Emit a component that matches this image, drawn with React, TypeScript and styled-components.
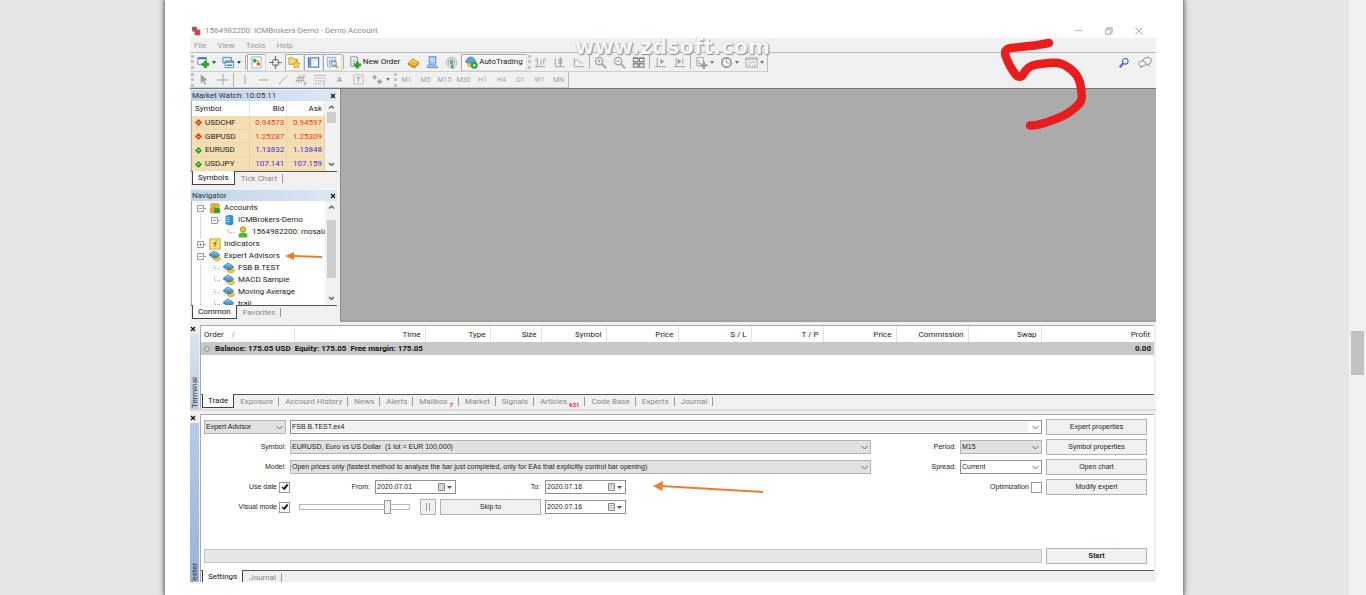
import React from "react";
import styled, { createGlobalStyle, css } from "styled-components";

const UI = 'Roboto, "Open Sans", sans-serif';
const FORM = '"Liberation Sans", sans-serif';

const GlobalStyle = createGlobalStyle`
  *, *::before, *::after { box-sizing: border-box; }
  html, body { margin: 0; background: #e6e6e6; }
  body { font-family: ${UI}; font-size: 8px; line-height: 12px; color: #222; overflow: hidden; }
  button, input, select { font: inherit; color: inherit; margin: 0; }
  svg { display: block; flex: none; }
`;

/* ---------- page ---------- */

const Page = styled.div`
  display: flex;
  min-height: 100vh;
`;

const Sheet = styled.main`
  flex: 1;
  min-width: 0;
  margin: 0 166px 0 165px;
  padding: 24px 27px 0 25px;
  background: #fff;
  box-shadow: 0 0 3px 1px #777, 0 0 7px 1px #999;
`;

const ScrollTrack = styled.div`
  width: 17px;
  padding: 331px 2px 0;
  background: #f0f0f0;
`;

const ScrollThumb = styled.div`
  height: 44px;
  background: #c1c1c1;
`;

const Window = styled.div`
  position: relative;
  background: #f0f0f0;
`;

/* ---------- title and menu ---------- */

const TitleBar = styled.header`
  display: flex;
  align-items: center;
  height: 14px;
  padding: 0 12px 0 1px;
  background: #fff;
  color: #8a8a8a;
`;

const Title = styled.h1`
  flex: 1;
  margin: 0 0 0 4px;
  font-size: 8px;
  font-weight: 400;
`;

const WindowButtons = styled.div`
  display: flex;
  gap: 20px;
`;

const PlainButton = styled.button`
  display: flex;
  align-items: center;
  justify-content: center;
  padding: 0;
  border: 0;
  background: none;
`;

const Menu = styled.nav`
  display: flex;
  gap: 11px;
  height: 15px;
  padding: 1px 4px 0;
  border-bottom: 1px solid #bdbdbd;
  color: #9a9a9a;
`;

const MenuItem = styled(PlainButton)`
  height: 13px;
`;

/* ---------- toolbars ---------- */

const ToolRow = styled.div`
  display: flex;
  justify-content: space-between;
  padding-right: 4px;
`;

const ToolBand = styled.div<{ $h: number }>`
  display: flex;
  align-items: center;
  height: ${(p) => p.$h}px;
  border-right: 1px solid #bbb;
  border-bottom: 1px solid #cfcfcf;
`;

const Grip = styled.div`
  width: 3px;
  height: 14px;
  margin-left: 1px;
  border-left: 3px dotted #c4c4c4;
`;

const Sep = styled.div`
  width: 1px;
  height: 14px;
  margin: 0 1px;
  background: #b0b0b0;
`;

const Tool = styled(PlainButton)<{ $w?: number; $on?: boolean }>`
  width: ${(p) => p.$w || 19}px;
  height: 17px;
  gap: 1px;
  color: #222;
  white-space: nowrap;
  ${(p) =>
    p.$on &&
    css`
      background: #f6f6f6;
      border: 1px solid #d8d8d8;
      border-top-color: #aaa;
      border-left-color: #aaa;
    `}
`;

const Period = styled(Tool)`
  color: #a5a5a5;
  font-size: 7px;
`;

const ToolLetter = styled.span`
  color: #a5a5a5;
  font-weight: 600;
`;

const SearchTools = styled.div`
  display: flex;
  align-items: center;
  gap: 8px;
`;

/* ---------- panels ---------- */

const Work = styled.div`
  display: flex;
  border-top: 1px solid #777;
`;

const Dock = styled.aside`
  display: flex;
  flex-direction: column;
  gap: 4px;
  width: 150px;
  padding: 1px 3px 2px 1px;
`;

const ChartArea = styled.section`
  flex: 1;
  background: #ababab;
  border-left: 1px solid #8a8a8a;
  border-bottom: 2px solid #a0a0a0;
`;

const Panel = styled.section``;

const PanelTitle = styled.h2`
  display: flex;
  align-items: center;
  justify-content: space-between;
  height: 11px;
  margin: 0;
  padding: 0 1px 0 1px;
  font-size: 8px;
  font-weight: 400;
  color: #333;
  background: linear-gradient(90deg, #bfd3e8, #dce8f4);
`;

const PanelBody = styled.div<{ $h: number }>`
  display: flex;
  height: ${(p) => p.$h}px;
  overflow: hidden;
  background: #fff;
  border-left: 1px solid #aaa;
`;

const Scroll = styled.div`
  display: flex;
  flex-direction: column;
  align-items: center;
  width: 12px;
  padding: 3px 0;
  background: #f2f2f2;
`;

const Thumb = styled.div<{ $top: number; $h: number }>`
  width: 9px;
  height: ${(p) => p.$h}px;
  margin: ${(p) => p.$top}px 0 auto;
  background: #cdcdcd;
`;

const Quotes = styled.table`
  flex: 1;
  height: 70px;
  border-collapse: collapse;
  table-layout: fixed;
  line-height: 10px;
  th, td { padding: 1px 2px 0 0; text-align: right; border-right: 1px solid #e4d3b0; }
  th { height: 15px; font-weight: 400; border-color: #e5e5e5; }
  th:first-child, td:first-child { width: 57px; text-align: left; padding-left: 3px; }
  td { border-bottom: 1px solid #ecd9b4; }
  tbody { background: #f6deb3; }
`;

const Price = styled.td<{ $up: boolean }>`
  color: ${(p) => (p.$up ? "#3a2ee0" : "#f03a20")};
`;

const Pair = styled.span`
  display: flex;
  align-items: center;
  gap: 3px;
`;

const TabBar = styled.div<{ $h?: number }>`
  display: flex;
  height: ${(p) => p.$h || 15}px;
  padding-left: 1px;
  border-top: 1px solid #555;
`;

const Tab = styled.button<{ $on?: boolean }>`
  display: flex;
  align-items: center;
  height: 13px;
  padding: 0 6px;
  border: 0;
  background: linear-gradient(#999, #999) right 2px / 1px 9px no-repeat;
  color: #888;
  white-space: nowrap;
  ${(p) =>
    p.$on &&
    css`
      height: 14px;
      margin-top: -1px;
      padding: 1px 5px 0;
      color: #111;
      background: #fff;
      border: 1px solid #444;
      border-top: 0;
    `}
`;

const Count = styled.sub`
  align-self: flex-end;
  margin-left: 2px;
  color: #e23;
  font-size: 6px;
  font-weight: 700;
  line-height: 6px;
`;

const Tree = styled.ul`
  flex: 1;
  min-width: 0;
  margin: 0;
  padding: 1px 0 0 5px;
  list-style: none;
  white-space: nowrap;
`;

const Node = styled.li<{ $level: number }>`
  display: flex;
  align-items: center;
  gap: 3px;
  height: 12px;
  padding-left: ${(p) => p.$level * 14}px;
  background: ${(p) =>
    p.$level
      ? "repeating-linear-gradient(#bbb 0 1px, transparent 1px 2px) 3px 0 / 1px 100% no-repeat"
      : "none"};
`;

const NodeMark = styled.span`
  display: flex;
  width: 9px;
`;

const Arrow = styled.svg`
  margin-left: 1px;
`;

/* ---------- lower docks ---------- */

const Bottom = styled.section<{ $gap: number }>`
  display: flex;
  margin-top: ${(p) => p.$gap}px;
  border-bottom: 2px solid #dcdcdc;
  padding-right: 2px;
`;

const Tester = styled(Bottom)`
  overflow: hidden;
  border-bottom: 0;
`;

const Side = styled.div`
  display: flex;
  flex-direction: column;
  align-items: flex-start;
  width: 10px;
  padding-top: 1px;
`;

const SideName = styled.div<{ $deep?: boolean; $clip?: boolean }>`
  flex: 1;
  width: 9px;
  height: 0;
  margin-top: 2px;
  overflow: hidden;
  writing-mode: vertical-rl;
  transform: rotate(180deg);
  line-height: 9px;
  color: #333;
  background: ${(p) => (p.$deep ? "linear-gradient(#98b4da, #b4cbea)" : "linear-gradient(#b9cce0, #d8e6f3)")};
  text-indent: ${(p) => (p.$clip ? "-3px" : "1px")};
`;

const BottomBody = styled.div`
  flex: 1;
  min-width: 0;
  border-top: 1px solid #aaa;
  border-left: 1px solid #aaa;
`;

const TradeArea = styled.div`
  height: 68px;
  background: #fff;
`;

const Trades = styled.table`
  width: 100%;
  border-collapse: collapse;
  table-layout: fixed;
  th { height: 16px; padding: 1px 4px 0 3px; text-align: right; font-weight: 400; border-right: 1px solid #e2e2e2; }
  th:first-child { text-align: left; }
  th:last-child { border-right: 0; }
  td { height: 13px; padding: 0 3px 0 2px; font-weight: 700; color: #111; background: #c8c8c8; }
  td:last-child { text-align: right; }
`;

const SortMark = styled.span`
  margin-left: 8px;
  color: #888;
`;

const Balance = styled.span`
  display: flex;
  align-items: center;
  gap: 4px;
  white-space: pre;
`;

/* ---------- tester form ---------- */

const Form = styled.form`
  position: relative;
  padding: 4px 7px 6px 3px;
  background: #fff;
  font-family: ${FORM};
  font-size: 7px;
`;

const Fields = styled.div`
  display: grid;
  grid-template-columns: 82px minmax(0, 1fr) 81px 82px 101px;
  grid-auto-rows: 16px;
  column-gap: 4px;
  row-gap: 4px;
  align-items: center;
`;

const Label = styled.label`
  text-align: right;
  white-space: nowrap;
`;

const CheckLabel = styled.label<{ $span?: boolean }>`
  display: flex;
  align-items: center;
  justify-content: flex-end;
  gap: 2px;
  margin-right: ${(p) => (p.$span ? "0" : "-4px")};
  white-space: nowrap;
  ${(p) => p.$span && "grid-column: span 2;"}
`;

const Check = styled.input.attrs({ type: "checkbox" })`
  appearance: none;
  display: flex;
  align-items: center;
  justify-content: center;
  width: 11px;
  height: 11px;
  border: 1px solid #999;
  background: #fff;
  &:checked::after {
    content: "";
    width: 3px;
    height: 6px;
    margin-top: -2px;
    border: solid #111;
    border-width: 0 1px 1px 0;
    box-shadow: 1px 0 0 #111;
    transform: rotate(40deg);
  }
`;

const SelectBox = styled.div<{ $wide?: boolean }>`
  position: relative;
  ${(p) => p.$wide && "grid-column: 2 / 5;"}
  svg { position: absolute; right: 3px; top: 5px; pointer-events: none; }
`;

const Select = styled.select<{ $white?: boolean; $wide?: boolean }>`
  appearance: none;
  display: block;
  width: 100%;
  height: 14px;
  padding: 0 14px 0 1px;
  border: 1px solid ${(p) => (p.$white ? "#8f8f8f" : "#b4b4b4")};
  border-radius: 0;
  line-height: 12px;
  background: ${(p) => (p.$white ? "#fff" : "#e1e1e1")};
  ${(p) =>
    p.$wide &&
    css`
      background: linear-gradient(#f0f0f0, #f0f0f0) 1px 1px / calc(100% - 14px) 10px no-repeat #fff;
    `}
`;

const Button = styled.button<{ $bold?: boolean }>`
  height: 16px;
  padding: 0;
  border: 1px solid #b2b2b2;
  background: #f0f0f0;
  font-weight: ${(p) => (p.$bold ? 700 : 400)};
`;

const Inline = styled.div`
  display: flex;
  align-items: center;
`;

const DateLabel = styled(Label)<{ $w: number }>`
  width: ${(p) => p.$w}px;
  padding-right: 5px;
`;

const DateBox = styled.div`
  display: flex;
  align-items: center;
  width: 81px;
  height: 14px;
  padding-right: 2px;
  border: 1px solid #8f8f8f;
  background: #fff;
`;

const DateInput = styled.input`
  flex: 1;
  min-width: 0;
  height: 12px;
  padding: 0 1px;
  border: 0;
  background: none;
`;

const Slider = styled.input.attrs({ type: "range" })`
  appearance: none;
  width: 111px;
  height: 14px;
  margin: 0 10px 0 9px;
  background: none;
  &::-webkit-slider-runnable-track {
    height: 6px;
    border: 1px solid #b5b5b5;
    background: #fff;
  }
  &::-webkit-slider-thumb {
    appearance: none;
    width: 7px;
    height: 14px;
    margin-top: -5px;
    border: 1px solid #999;
    background: #f0f0f0;
  }
`;

const Pause = styled(Button)`
  display: flex;
  align-items: center;
  justify-content: center;
  width: 16px;
  margin-right: 4px;
`;

const Skip = styled(Button)`
  width: 101px;
  margin-right: 4px;
`;

const StartRow = styled.div`
  display: grid;
  grid-template-columns: minmax(0, 1fr) 101px;
  column-gap: 4px;
  align-items: center;
  margin-top: 33px;
`;

const Progress = styled.div`
  height: 14px;
  border: 1px solid #c4c4c4;
  background: #e6e6e6;
`;

/* ---------- marks drawn over the window ---------- */

const Watermark = styled.div`
  position: absolute;
  left: 385px;
  top: 11px;
  font: 700 21px/24px "DejaVu Sans", sans-serif;
  color: #f6f6f6;
  text-shadow: 1px 1px 1px #8a8a8a, 0 0 1px #aaa;
  pointer-events: none;
`;

const Scribble = styled.svg`
  position: absolute;
  right: 68px;
  top: 14px;
`;

const FormArrow = styled.svg`
  position: absolute;
  left: 451px;
  top: 64px;
`;

/* ---------- icons ---------- */

const g = "#a0a0a0";
const art: Record<string, React.ReactNode> = {
  newChart: (
    <>
      <path d="M1 2h9v7H1z" fill="#fff" stroke="#5a86b8" />
      <path d="M1 2.5h9" stroke="#3f74b0" strokeWidth="2" />
      <path d="M9 5v8M5 9h8" stroke="#2aa52a" strokeWidth="3.4" />
    </>
  ),
  profiles: (
    <>
      <path d="M1 1.500h9v6H1z" fill="#dcebf8" stroke="#4b86c4" />
      <path d="M3.500 5.500h9v7h-9z" fill="#fff" stroke="#4b86c4" />
      <path d="M3.500 6.500h9M5 10h6" stroke="#4b86c4" strokeWidth="1.500" />
    </>
  ),
  market: (
    <>
      <path d="M2 1h10v12H2z" fill="#fff" stroke="#8ab0d8" />
      <path d="M5 2.500L7.500 5 5 7.500 2.500 5z" fill="#35a535" />
      <path d="M9 6l2.500 2.500L9 11 6.500 8.500z" fill="#ee6030" />
      <path d="M7.500 4.500l2 2" stroke="#f0b040" strokeWidth="2" />
    </>
  ),
  cross: (
    <>
      <circle cx="7" cy="7" r="3.500" fill="none" stroke="#777" strokeWidth="1.200" />
      <path d="M7 0v5.500M7 8.500V14M0 7h5.500M8.500 7H14" stroke="#777" strokeWidth="1.300" />
    </>
  ),
  folder: (
    <>
      <path d="M1 2h4l1 1.500h4V9H1z" fill="#f8df80" stroke="#c0962a" />
      <path d="M9 5l1.300 2.600 2.700.4-2 2 .5 3L9 11.500 6.500 13l.5-3-2-2 2.700-.4z" fill="#ffd83c" stroke="#b88a18" strokeWidth=".8" />
    </>
  ),
  terminal: (
    <>
      <path d="M1.500 2h11v10h-11z" fill="#fff" stroke="#4b80bc" strokeWidth="1.300" />
      <path d="M3.500 3v8" stroke="#4b80bc" strokeWidth="2" />
      <path d="M6 5h4M6 7.500h2" stroke="#b4c8dc" />
    </>
  ),
  tester: (
    <>
      <path d="M1.500 1.500h9v10h-9z" fill="#eef4fa" stroke="#8aa6c6" />
      <path d="M4 4v6M6.500 3v5M9 4v4" stroke="#5a86b8" />
      <circle cx="8.500" cy="8" r="2.600" fill="#dceaf8" stroke="#4b7fb8" />
      <path d="M10.500 10l2.500 3" stroke="#c79a30" strokeWidth="1.800" />
    </>
  ),
  order: (
    <>
      <path d="M2 1h7v10H2z" fill="#fff" stroke="#888" />
      <path d="M4 4h3M4 6h3M4 8h2" stroke="#999" />
      <path d="M9 6v7.500M5.300 9.800H13" stroke="#2aa52a" strokeWidth="3.200" />
    </>
  ),
  gold: (
    <>
      <path d="M1 8v1.500l7 4 5-5V7z" fill="#c88a18" />
      <path d="M1 8l5-5 7 4-5 5z" fill="#f0b62c" stroke="#b07a10" strokeWidth=".8" />
      <path d="M3.500 7.500l3-3 4 2.300" stroke="#ffe9a0" fill="none" />
    </>
  ),
  server: (
    <>
      <path d="M3.500 1h7v6.500h-7z" fill="#d6e9fa" stroke="#4f8fd0" strokeWidth="1.200" />
      <path d="M2.500 9.500h8l2 3h-11z" fill="#a9cdf0" stroke="#4f8fd0" />
      <path d="M5 5.500l2-2 2 2" stroke="#4f8fd0" fill="none" />
    </>
  ),
  signal: (
    <>
      <circle cx="7" cy="7" r="5.700" fill="none" stroke="#9cb4c4" />
      <circle cx="7" cy="7" r="3.700" fill="none" stroke="#86a8b8" />
      <path d="M7 6l2.500 7.500H7z" fill="#2e9c3c" />
      <circle cx="7" cy="6.500" r="2" fill="#42b055" />
    </>
  ),
  auto: (
    <>
      <path d="M2 7h8l-1 4.500H4z" fill="#f2c53c" stroke="#b78f1c" strokeWidth=".6" />
      <path d="M0 6c2-1 2-5 6-5s4 3 6 4c-3 3-9 3.500-12 1z" fill="#5aa5dc" stroke="#2e75ae" strokeWidth=".6" />
      <circle cx="10" cy="10" r="3.700" fill="#27a038" />
      <path d="M9 8l3 2-3 2z" fill="#fff" />
    </>
  ),
  bars: <path d="M3.500 2v10M1 11.500h11M1 4.500h2.500M7.500 4v6M10.500 3v6M10.500 3.500H13" stroke={g} fill="none" />,
  candles: <path d="M2.500 2v9.500H13M6.500 3.500h3v5h-3zM8 1v10" stroke={g} fill="none" />,
  line: <path d="M2.500 2v9.500H13M2.500 7c2-4 4-3 5-1l4 2" stroke={g} fill="none" />,
  zoomIn: (
    <>
      <circle cx="5.500" cy="5.500" r="4" fill="none" stroke={g} strokeWidth="1.200" />
      <path d="M3.500 5.500h4M5.500 3.500v4" stroke={g} />
      <path d="M8.500 8.500L13 13" stroke={g} strokeWidth="2" />
    </>
  ),
  zoomOut: (
    <>
      <circle cx="5.500" cy="5.500" r="4" fill="none" stroke={g} strokeWidth="1.200" />
      <path d="M3.500 5.500h4" stroke={g} />
      <path d="M8.500 8.500L13 13" stroke={g} strokeWidth="2" />
    </>
  ),
  tile: (
    <path d="M1.500 2h5v4h-5zM8 2h5v4H8zM1.500 8h5v4h-5zM8 8h5v4H8zM1.500 2.500h5M8 2.500h5M1.500 8.500h5M8 8.500h5" stroke="#858585" strokeWidth="1.200" fill="none" />
  ),
  scroll: (
    <>
      <path d="M3.500 2v10M1 11.500h12" stroke={g} fill="none" />
      <path d="M7 3l4 3-4 3z" fill={g} />
    </>
  ),
  shift: (
    <>
      <path d="M3.500 2v10M1 11.500h12M10.500 2v7" stroke={g} fill="none" />
      <path d="M5 3l4 3-4 3z" fill={g} />
    </>
  ),
  indicator: (
    <>
      <path d="M2 1.500h7v9H2z" fill="#f8f8f8" stroke={g} />
      <path d="M4 4v4h3" stroke={g} fill="none" />
      <path d="M9.500 6v8M5.500 10h8" stroke="#9a9a9a" strokeWidth="2.400" />
    </>
  ),
  clock: (
    <>
      <circle cx="7" cy="7" r="5" fill="#f6f6f6" stroke="#909090" strokeWidth="1.700" />
      <path d="M7 4v3.500h3" stroke="#909090" fill="none" />
    </>
  ),
  template: (
    <>
      <path d="M1 2h12v10H1z" fill="#f8f8f8" stroke={g} />
      <path d="M1 3.500h12M3 8l2-2 2 2 2-2 2 1M3 10h3M8 10h3" stroke={g} fill="none" />
    </>
  ),
  cursor: <path d="M4 1v10l2.500-2.500L8 12.500l1.500-.7L8 8h3.500z" fill={g} />,
  plus: <path d="M7.500 1v12M1 7.500h12" stroke={g} fill="none" />,
  vline: <path d="M7.500 2v10" stroke={g} />,
  hline: <path d="M2 7.500h10" stroke={g} />,
  slant: <path d="M3 12L12 3" stroke={g} />,
  channel: <path d="M1 10l5-8M3 11l7-10M6 11l5-8M2 5h8M1 8h9M10 13.500v-3h3M10 12h2" stroke={g} strokeWidth=".9" fill="none" />,
  fibo: <path d="M1 2.500h12M1 5.500h12M1 8.500h12M1 11.500h7M10.500 14v-3.500H13" stroke={g} strokeDasharray="2 1" fill="none" />,
  textBox: (
    <>
      <path d="M2 2h10v10H2z" stroke={g} strokeDasharray="1.500 1" fill="none" />
      <path d="M4.500 5h5M7 5v5" stroke={g} />
    </>
  ),
  arrows: <path d="M1 5l3-3 3 3H5v2H3V5zM6 9l3 3 4-3h-2V7H8v2z" fill={g} />,
  caret: <path d="M1 1h4L3 4z" fill="#444" />,
  caretGray: <path d="M1 1h4L3 4z" fill="#777" />,
  search: (
    <>
      <circle cx="8.500" cy="5" r="3.300" fill="#eef3fc" stroke="#4a68c8" strokeWidth="1.300" />
      <path d="M6 7.500L2 12" stroke="#4a68c8" strokeWidth="2.400" />
    </>
  ),
  chat: (
    <>
      <path d="M6 2.500c2-1.500 6-1.500 7 .5s0 4-2 4.500L11 10 9 8.200C6 8 4 4.500 6 2.500z" fill="#f4f4f4" stroke="#8c8c8c" />
      <path d="M1.500 6c1-1 4-1.500 5.500 0s1 3.500-1 4H4L2.500 12v-2C0 9 .5 7 1.500 6z" fill="#f4f4f4" stroke="#8c8c8c" />
    </>
  ),
  logo: (
    <>
      <path d="M1 1h7l1 6-7 1z" fill="#6a6e74" />
      <path d="M5 5h8v8H5z" fill="#d8404a" />
      <path d="M3 3l4-.5.500 3" stroke="#d8404a" fill="none" strokeWidth="1.500" />
    </>
  ),
  min: <path d="M1 6.500h11" stroke="#999" />,
  max: <path d="M2.500 4.500h7v7h-7zM4.500 4.500v-2h7v7h-2" stroke="#888" fill="none" />,
  close: <path d="M2 2l10 10M12 2L2 12" stroke="#888" fill="none" />,
  x: <path d="M1 1l4 4M5 1L1 5" stroke="#111" strokeWidth="1.200" />,
  up: <path d="M1 4.500l2.500-2.500L6 4.500" stroke="#555" strokeWidth="1.200" fill="none" />,
  down: <path d="M1 2l2.500 2.500L6 2" stroke="#555" strokeWidth="1.200" fill="none" />,
  chevron: <path d="M.5 1l3 3 3-3" stroke="#666" fill="none" />,
  pause: <path d="M1.500 0v8M4.500 0v8" stroke="#999" />,
  quoteDown: (
    <>
      <path d="M3.500 0L7 3.500 3.500 7 0 3.500z" fill="#d8421c" />
      <path d="M2 3h3L3.500 5z" fill="#f8b890" />
    </>
  ),
  quoteUp: (
    <>
      <path d="M3.500 0L7 3.500 3.500 7 0 3.500z" fill="#2a9a2a" />
      <path d="M2 4h3L3.500 2z" fill="#b0e8a0" />
    </>
  ),
  accounts: (
    <>
      <path d="M1 13V8c0-2 7-2 7 0v5z" fill="#d8a22c" />
      <circle cx="4.500" cy="4" r="2.900" fill="#e8b840" stroke="#b08420" strokeWidth=".6" />
      <path d="M6 13V8.500c0-2 7-2 7 0V13z" fill="#3c9a34" />
      <circle cx="9.500" cy="4.500" r="2.900" fill="#e4c03c" stroke="#6f8a20" strokeWidth=".6" />
    </>
  ),
  db: (
    <>
      <path d="M3 2l6-1 3 1v10l-3 1.500L3 12z" fill="#2f8fd8" />
      <path d="M4 4h4M4 6.500h4M4 9h4" stroke="#c4e4fa" />
    </>
  ),
  user: (
    <>
      <path d="M2 13.500V10c0-3 10-3 10 0v3.500z" fill="#4ab52e" />
      <circle cx="7" cy="4" r="3.200" fill="#e6bc38" stroke="#8a9a20" />
    </>
  ),
  fx: (
    <>
      <path d="M1 1h12v12H1z" fill="#fbe27a" stroke="#c49a30" />
      <path d="M9.500 3.500C7 3 7.500 6 6.500 10.500M5 6.500h4" stroke="#7a5a10" fill="none" />
    </>
  ),
  expert: (
    <>
      <path d="M5 8l6-1 3 3-4 3-5-2z" fill="#f2c53c" stroke="#a8841c" strokeWidth=".6" />
      <path d="M0 5.500l5-4 4 1 3.500 3.500-3 2.500-5-1z" fill="#4f9fd4" stroke="#25689c" strokeWidth=".8" />
      <path d="M3 4.500l3-2 3 1.500" stroke="#b4dcf4" fill="none" />
      <path d="M1 6c1.500 3 5 3 8 2.500" stroke="#25689c" fill="none" />
    </>
  ),
  boxMinus: <path d="M.5.5h6v6h-6zM2 3.500h3M7 3.500h2" stroke="#999" fill="none" />,
  boxPlus: <path d="M.5.5h6v6h-6zM2 3.500h3M3.500 2v3M7 3.500h2" stroke="#999" fill="none" />,
  branch: <path d="M3.500 0v3.500H9" stroke="#aaa" strokeDasharray="1 1" fill="none" />,
  ring: <circle cx="4" cy="4" r="2.300" fill="#ddd" stroke="#888" />,
  calendar: (
    <>
      <path d="M1.500.5h6v7h-6z" fill="#e6e8ea" stroke="#888" />
      <path d="M2 2.500h5M2 5h5" stroke="#b4b8bc" />
      <path d="M10 3h5l-2.500 3z" fill="#556" />
    </>
  ),
};

const Icon = ({ name, w = 14, h = w, size }: { name: string; w?: number; h?: number; size?: number }) => (
  <svg width={size || w} height={size || h} viewBox={`0 0 ${w} ${h}`} aria-hidden="true">
    {art[name]}
  </svg>
);

const ToolIcon = ({ name, on, menu, gray }: { name: string; on?: boolean; menu?: boolean; gray?: boolean }) => (
  <Tool type="button" aria-label={name} $on={on} $w={menu ? 25 : 19}>
    <Icon name={name} size={13} />
    {menu && <Icon name={gray ? "caretGray" : "caret"} w={6} h={5} />}
  </Tool>
);

/* ---------- data ---------- */

const quotes = [
  ["USDCHF", "0.94573", "0.94597", false],
  ["GBPUSD", "1.25287", "1.25309", false],
  ["EURUSD", "1.13832", "1.13848", true],
  ["USDJPY", "107.141", "107.159", true],
] as const;

const tree: { level: number; icon: string; text: string; mark: string; arrow?: boolean }[] = [
  { level: 0, icon: "accounts", text: "Accounts", mark: "boxMinus" },
  { level: 1, icon: "db", text: "ICMBrokers-Demo", mark: "boxMinus" },
  { level: 2, icon: "user", text: "1564982200: mosala", mark: "branch" },
  { level: 0, icon: "fx", text: "Indicators", mark: "boxPlus" },
  { level: 0, icon: "expert", text: "Expert Advisors", mark: "boxMinus", arrow: true },
  { level: 1, icon: "expert", text: "FSB B.TEST", mark: "branch" },
  { level: 1, icon: "expert", text: "MACD Sample", mark: "branch" },
  { level: 1, icon: "expert", text: "Moving Average", mark: "branch" },
  { level: 1, icon: "expert", text: "trail", mark: "branch" },
];

const columns: [string, number | undefined][] = [
  ["Order", 93],
  ["Time", 131],
  ["Type", 65],
  ["Size", 51],
  ["Symbol", 65],
  ["Price", 72],
  ["S / L", 73],
  ["T / P", 72],
  ["Price", 73],
  ["Commission", 72],
  ["Swap", 73],
  ["Profit", undefined],
];

const terminalTabs: [string, string?][] = [
  ["Exposure"],
  ["Account History"],
  ["News"],
  ["Alerts"],
  ["Mailbox", "7"],
  ["Market"],
  ["Signals"],
  ["Articles", "931"],
  ["Code Base"],
  ["Experts"],
  ["Journal"],
];

const periods = ["M1", "M5", "M15", "M30", "H1", "H4", "D1", "W1", "MN"];

const Close = () => (
  <PlainButton type="button" aria-label="Close panel">
    <Icon name="x" w={6} />
  </PlainButton>
);

const Choice = ({ id, value, white, wide, label }: { id?: string; value: string; white?: boolean; wide?: boolean; label?: string }) => (
  <SelectBox $wide={wide}>
    <Select id={id} aria-label={label} $white={white} $wide={wide} defaultValue={value}>
      <option>{value}</option>
    </Select>
    <Icon name="chevron" w={7} h={5} />
  </SelectBox>
);

const DateField = ({ id, value, label }: { id?: string; value: string; label?: string }) => (
  <DateBox>
    <DateInput id={id} aria-label={label} defaultValue={value} />
    <PlainButton type="button" aria-label="Open calendar">
      <Icon name="calendar" w={16} h={8} />
    </PlainButton>
  </DateBox>
);

export default function App() {
  return (
    <Page>
      <GlobalStyle />
      <Sheet>
        <Window>
          <TitleBar>
            <Icon name="logo" size={10} />
            <Title>1564982200: ICMBrokers-Demo - Demo Account</Title>
            <WindowButtons>
              {["min", "max", "close"].map((n) => (
                <PlainButton key={n} type="button" aria-label={n}>
                  <Icon name={n} size={10} />
                </PlainButton>
              ))}
            </WindowButtons>
          </TitleBar>
          <Menu>
            {["File", "View", "Tools", "Help"].map((m) => (
              <MenuItem key={m} type="button">
                {m}
              </MenuItem>
            ))}
          </Menu>

          <ToolRow>
            <ToolBand $h={19}>
              <Grip />
              <ToolIcon name="newChart" menu />
              <ToolIcon name="profiles" menu />
              <Sep />
              <ToolIcon name="market" on />
              <ToolIcon name="cross" />
              <ToolIcon name="folder" on />
              <ToolIcon name="terminal" on />
              <ToolIcon name="tester" on />
              <Sep />
              <Tool type="button" $w={59}>
                <Icon name="order" size={13} />
                New Order
              </Tool>
              <ToolIcon name="gold" />
              <ToolIcon name="server" />
              <ToolIcon name="signal" />
              <Tool type="button" $on $w={66}>
                <Icon name="auto" size={13} />
                AutoTrading
              </Tool>
              <Grip />
              <ToolIcon name="bars" />
              <ToolIcon name="candles" />
              <ToolIcon name="line" />
              <Sep />
              <ToolIcon name="zoomIn" />
              <ToolIcon name="zoomOut" />
              <ToolIcon name="tile" />
              <Sep />
              <ToolIcon name="scroll" />
              <ToolIcon name="shift" />
              <Sep />
              <ToolIcon name="indicator" menu gray />
              <ToolIcon name="clock" menu gray />
              <ToolIcon name="template" menu gray />
            </ToolBand>
            <SearchTools>
              <PlainButton type="button" aria-label="Search">
                <Icon name="search" size={12} />
              </PlainButton>
              <PlainButton type="button" aria-label="Chat">
                <Icon name="chat" size={14} />
              </PlainButton>
            </SearchTools>
          </ToolRow>
          <ToolRow>
            <ToolBand $h={16}>
              <Grip />
              <ToolIcon name="cursor" />
              <ToolIcon name="plus" />
              <Sep />
              <ToolIcon name="vline" />
              <ToolIcon name="hline" />
              <ToolIcon name="slant" />
              <ToolIcon name="channel" />
              <ToolIcon name="fibo" />
              <Tool type="button">
                <ToolLetter>A</ToolLetter>
              </Tool>
              <ToolIcon name="textBox" />
              <ToolIcon name="arrows" menu gray />
              <Grip />
              {periods.map((p) => (
                <Period key={p} type="button">
                  {p}
                </Period>
              ))}
            </ToolBand>
          </ToolRow>

          <Work>
            <Dock>
              <Panel>
                <PanelTitle>
                  Market Watch: 10:05:11
                  <Close />
                </PanelTitle>
                <PanelBody $h={70}>
                  <Quotes>
                    <thead>
                      <tr>
                        <th>Symbol</th>
                        <th>Bid</th>
                        <th>Ask</th>
                      </tr>
                    </thead>
                    <tbody>
                      {quotes.map(([s, bid, ask, up]) => (
                        <tr key={s}>
                          <td>
                            <Pair>
                              <Icon name={up ? "quoteUp" : "quoteDown"} w={7} />
                              {s}
                            </Pair>
                          </td>
                          <Price $up={up}>{bid}</Price>
                          <Price $up={up}>{ask}</Price>
                        </tr>
                      ))}
                    </tbody>
                  </Quotes>
                  <Scroll>
                    <Icon name="up" w={7} />
                    <Thumb $top={1} $h={11} />
                    <Icon name="down" w={7} />
                  </Scroll>
                </PanelBody>
                <TabBar>
                  <Tab type="button" $on>
                    Symbols
                  </Tab>
                  <Tab type="button">Tick Chart</Tab>
                </TabBar>
              </Panel>
              <Panel>
                <PanelTitle>
                  Navigator
                  <Close />
                </PanelTitle>
                <PanelBody $h={104}>
                  <Tree>
                    {tree.map((n) => (
                      <Node key={n.text} $level={n.level}>
                        <NodeMark>
                          <Icon name={n.mark} w={9} h={7} />
                        </NodeMark>
                        <Icon name={n.icon} size={12} />
                        {n.text}
                        {n.arrow && (
                          <Arrow width="40" height="10" viewBox="0 0 40 10">
                            <path d="M38 6L9 5" stroke="#ed7d31" strokeWidth="2" />
                            <path d="M1 5l9-4v8z" fill="#ed7d31" />
                          </Arrow>
                        )}
                      </Node>
                    ))}
                  </Tree>
                  <Scroll>
                    <Icon name="up" w={7} />
                    <Thumb $top={9} $h={58} />
                    <Icon name="down" w={7} />
                  </Scroll>
                </PanelBody>
                <TabBar>
                  <Tab type="button" $on>
                    Common
                  </Tab>
                  <Tab type="button">Favorites</Tab>
                </TabBar>
              </Panel>
            </Dock>
            <ChartArea aria-label="Charts" />
          </Work>

          <Bottom $gap={3}>
            <Side>
              <Close />
              <SideName>Terminal</SideName>
            </Side>
            <BottomBody>
              <TradeArea>
                <Trades>
                  <colgroup>
                    {columns.map(([c, w], i) => (
                      <col key={c + i} width={w} />
                    ))}
                  </colgroup>
                  <thead>
                    <tr>
                      {columns.map(([c], i) => (
                        <th key={c + i}>
                          {c}
                          {i === 0 && <SortMark>/</SortMark>}
                        </th>
                      ))}
                    </tr>
                  </thead>
                  <tbody>
                    <tr>
                      <td colSpan={11}>
                        <Balance>
                          <Icon name="ring" w={8} />
                          {"Balance: 175.05 USD  Equity: 175.05  Free margin: 175.05"}
                        </Balance>
                      </td>
                      <td>0.00</td>
                    </tr>
                  </tbody>
                </Trades>
              </TradeArea>
              <TabBar>
                <Tab type="button" $on>
                  Trade
                </Tab>
                {terminalTabs.map(([t, n]) => (
                  <Tab key={t} type="button">
                    {t}
                    {n && <Count>{n}</Count>}
                  </Tab>
                ))}
              </TabBar>
            </BottomBody>
          </Bottom>

          <Tester $gap={3}>
            <Side>
              <Close />
              <SideName $deep $clip>
                Tester
              </SideName>
            </Side>
            <BottomBody>
              <Form onSubmit={(e) => e.preventDefault()}>
                <Fields>
                  <Choice label="Program type" value="Expert Advisor" />
                  <Choice label="Expert" value="FSB B.TEST.ex4" white wide />
                  <Button type="button">Expert properties</Button>

                  <Label htmlFor="symbol">Symbol:</Label>
                  <Choice id="symbol" value={"EURUSD, Euro vs US Dollar \u00a0(1 lot = EUR 100,000)"} />
                  <Label htmlFor="period">Period:</Label>
                  <Choice id="period" value="M15" />
                  <Button type="button">Symbol properties</Button>

                  <Label htmlFor="model">Model:</Label>
                  <Choice
                    id="model"
                    value="Open prices only (fastest method to analyze the bar just completed, only for EAs that explicitly control bar opening)"
                  />
                  <Label htmlFor="spread">Spread:</Label>
                  <Choice id="spread" value="Current" white />
                  <Button type="button">Open chart</Button>

                  <CheckLabel>
                    Use date <Check defaultChecked />
                  </CheckLabel>
                  <Inline>
                    <DateLabel htmlFor="from" $w={85}>
                      From:
                    </DateLabel>
                    <DateField id="from" value="2020.07.01" />
                    <DateLabel htmlFor="to" $w={89}>
                      To:
                    </DateLabel>
                    <DateField id="to" value="2020.07.16" />
                  </Inline>
                  <CheckLabel $span>
                    Optimization <Check />
                  </CheckLabel>
                  <Button type="button">Modify expert</Button>

                  <CheckLabel>
                    Visual mode <Check defaultChecked />
                  </CheckLabel>
                  <Inline>
                    <Slider aria-label="Speed" defaultValue={82} />
                    <Pause type="button" aria-label="Pause">
                      <Icon name="pause" w={6} h={8} />
                    </Pause>
                    <Skip type="button">Skip to</Skip>
                    <DateField label="Skip to date" value="2020.07.16" />
                  </Inline>
                </Fields>
                <StartRow>
                  <Progress role="progressbar" aria-label="Test progress" />
                  <Button type="button" $bold>
                    Start
                  </Button>
                </StartRow>
                <FormArrow width="114" height="18" viewBox="0 0 114 18">
                  <path d="M111 13L9 7" stroke="#ed7d31" strokeWidth="2" />
                  <path d="M1 7l10-5-.6 10z" fill="#ed7d31" />
                </FormArrow>
              </Form>
              <TabBar $h={12}>
                <Tab type="button" $on>
                  Settings
                </Tab>
                <Tab type="button">Journal</Tab>
              </TabBar>
            </BottomBody>
          </Tester>

          <Watermark>www.zdsoft.com</Watermark>
          <Scribble width="88" height="96" viewBox="1000 38 88 96" aria-hidden="true">
            <path
              d="M1049 43C1042 44 1037 45.500 1029 46L1011 48C1005 49 1004 52 1006 57C1008 63 1012 70 1016 75C1019 78 1022 77 1024 73C1028 66 1033 65 1040 64C1048 63 1058 61 1066 66C1075 71 1080 79 1081 88C1082 97 1083 101 1077 106C1070 113 1062 117 1053 120C1045 123 1038 126 1030 125.500"
              fill="none"
              stroke="#e81e1e"
              strokeWidth="8.500"
              strokeLinecap="round"
              strokeLinejoin="round"
            />
          </Scribble>
        </Window>
      </Sheet>
      <ScrollTrack>
        <ScrollThumb />
      </ScrollTrack>
    </Page>
  );
}
